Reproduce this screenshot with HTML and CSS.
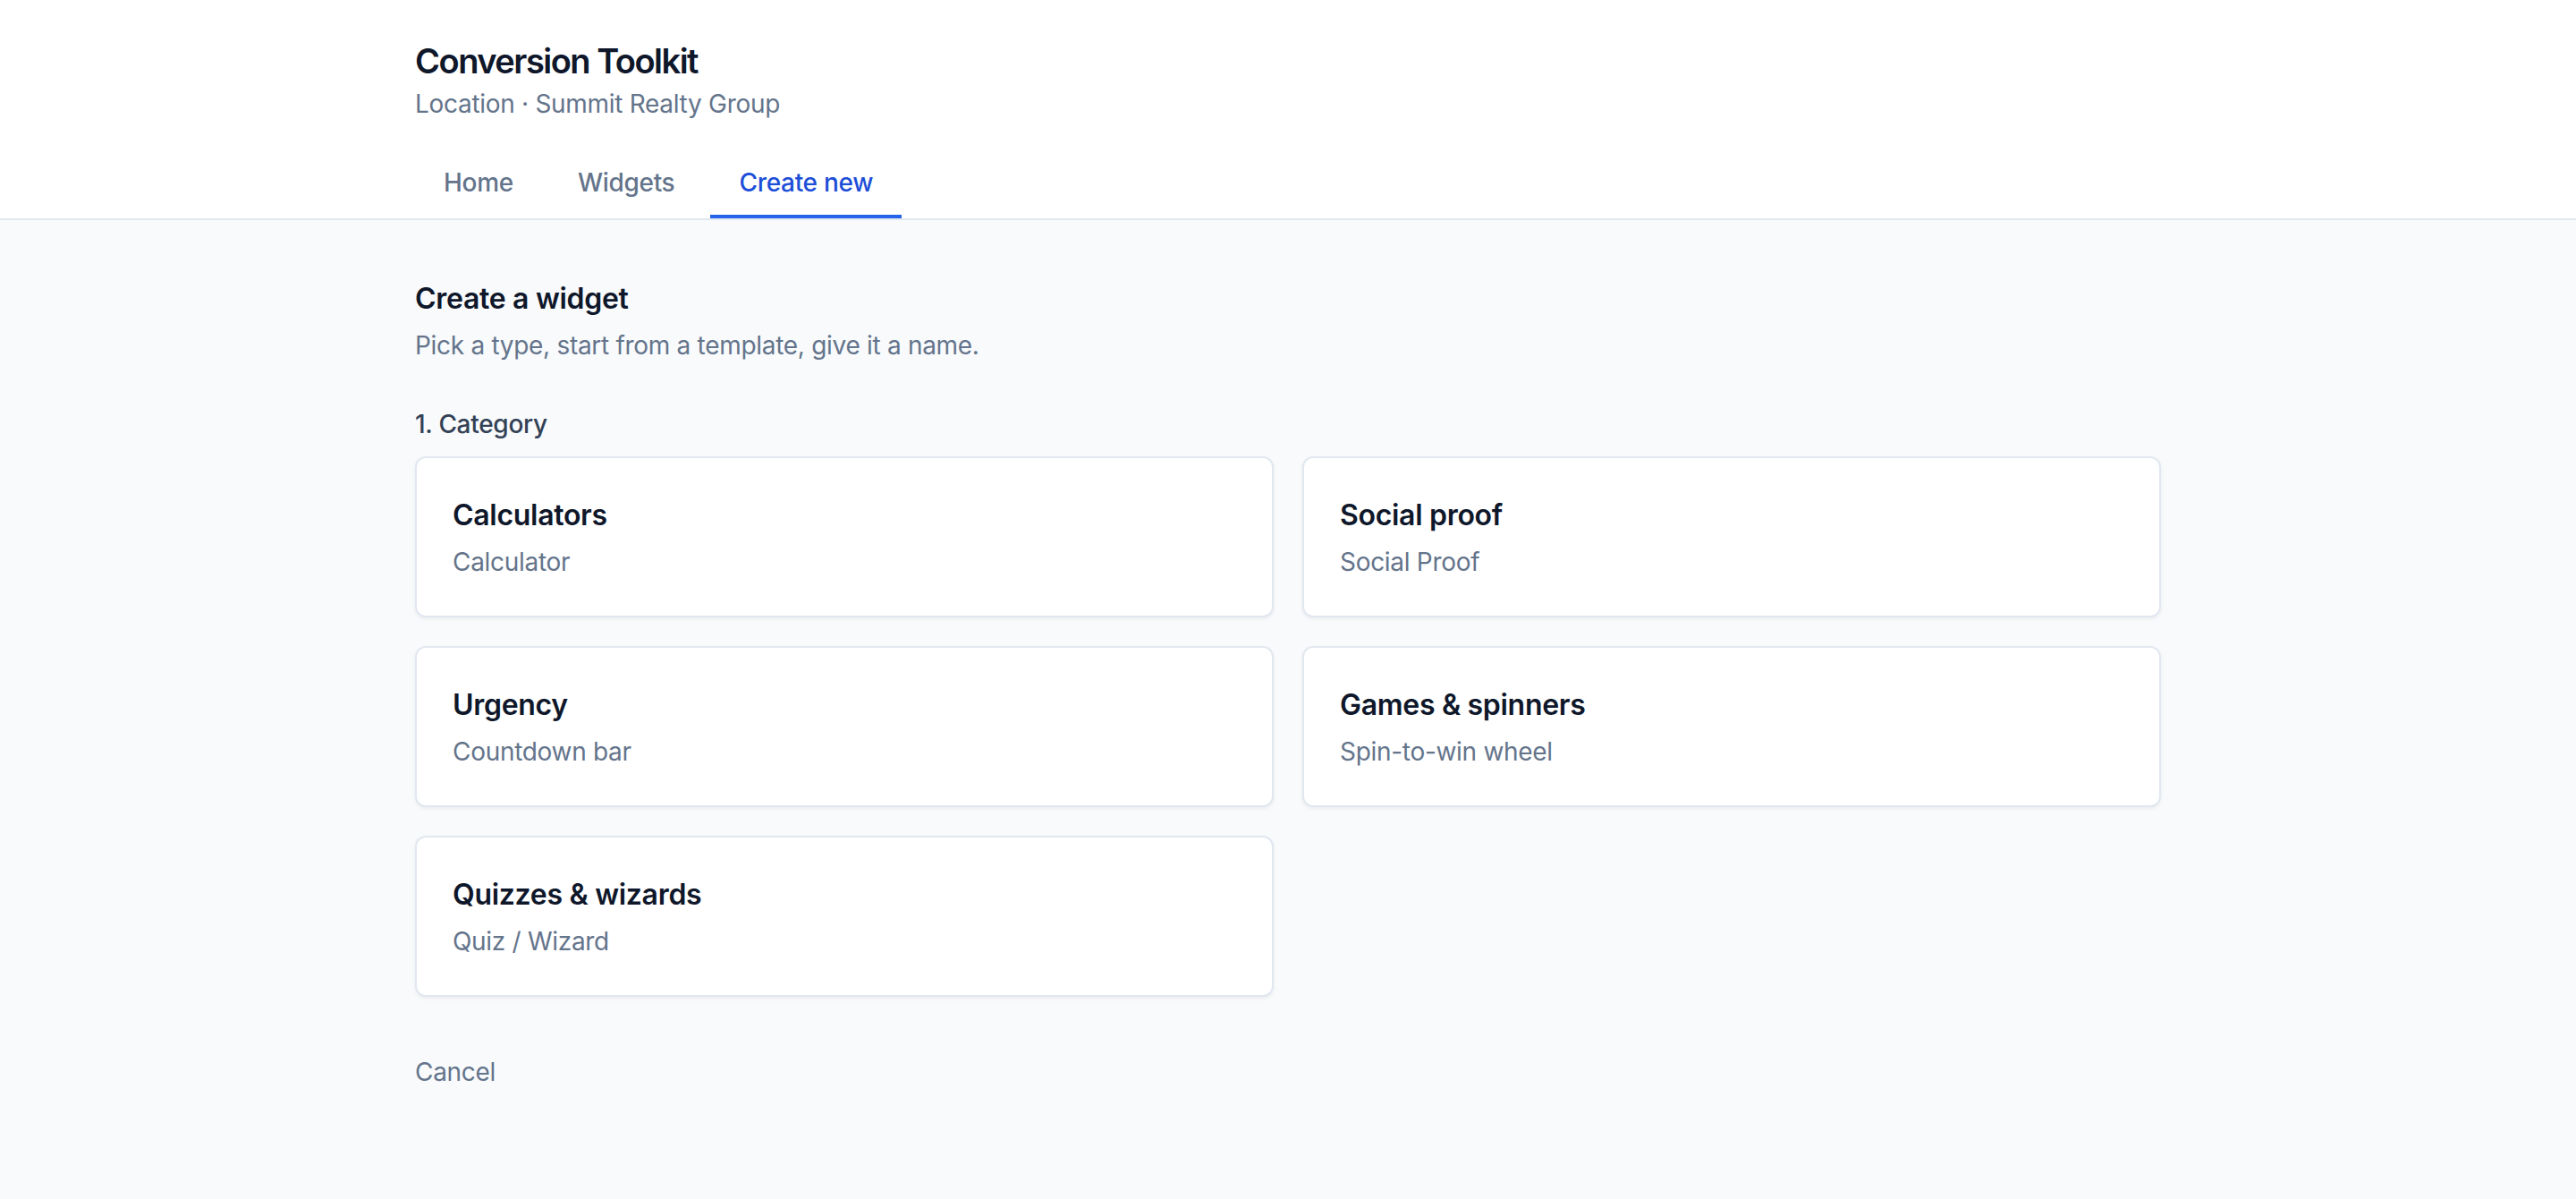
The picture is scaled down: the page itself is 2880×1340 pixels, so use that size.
FILE: index.html
```html
<!DOCTYPE html>
<html lang="en">
<head>
  <meta charset="UTF-8">
  <title>Conversion Toolkit</title>
  <link rel="stylesheet" href="styles.css">
</head>
<body>

  <header class="app-header">
    <div class="wrap">
      <h1 class="app-title">Conversion Toolkit</h1>
      <div class="app-sub">Location · Summit Realty Group</div>

      <nav class="tabs">
        <a class="tab" href="#">Home</a>
        <a class="tab" href="#">Widgets</a>
        <a class="tab active" href="#">Create new</a>
      </nav>
    </div>
  </header>

  <main class="wrap page">
    <h2 class="page-title">Create a widget</h2>
    <p class="page-sub">Pick a type, start from a template, give it a name.</p>

    <div class="step-label">1. Category</div>

    <div class="category-grid">
      <button class="category-card">
        <span class="card-title">Calculators</span>
        <span class="card-sub">Calculator</span>
      </button>
      <button class="category-card">
        <span class="card-title">Social proof</span>
        <span class="card-sub">Social Proof</span>
      </button>
      <button class="category-card">
        <span class="card-title">Urgency</span>
        <span class="card-sub">Countdown bar</span>
      </button>
      <button class="category-card">
        <span class="card-title">Games &amp; spinners</span>
        <span class="card-sub">Spin-to-win wheel</span>
      </button>
      <button class="category-card">
        <span class="card-title">Quizzes &amp; wizards</span>
        <span class="card-sub">Quiz / Wizard</span>
      </button>
    </div>

    <a class="cancel-link" href="#">Cancel</a>
  </main>

</body>
</html>
```

FILE: styles.css
```css
* {
  box-sizing: border-box;
}

body {
  margin: 0;
  font-family: Inter, "Noto Sans", sans-serif;
  letter-spacing: -0.3px;
  background: #f8fafc;
  color: #0f172a;
}

.wrap {
  max-width: 2048px;
  margin: 0 auto;
  padding: 0 48px;
}

/* header */
.app-header {
  background: #fff;
  border-bottom: 2px solid #e2e8f0;
  padding-top: 40px;
}

.app-title {
  margin: 0;
  font-size: 38px;
  line-height: 56px;
  font-weight: 600;
  letter-spacing: -1.5px;
  color: #0f172a;
}

.app-sub {
  font-size: 28px;
  line-height: 40px;
  color: #64748b;
}

.tabs {
  display: flex;
  gap: 8px;
  margin-top: 32px;
}

.tab {
  display: block;
  padding: 16px 32px;
  font-size: 28px;
  line-height: 40px;
  font-weight: 500;
  color: #64748b;
  text-decoration: none;
  border-bottom: 4px solid transparent;
}

.tab.active {
  color: #1d4ed8;
  border-bottom-color: #2563eb;
}

/* page */
.page {
  padding-top: 64px;
  padding-bottom: 64px;
}

.page-title {
  margin: 0;
  font-size: 32px;
  line-height: 48px;
  font-weight: 600;
  color: #0f172a;
}

.page-sub {
  margin: 8px 0 0;
  font-size: 28px;
  line-height: 40px;
  color: #64748b;
}

.step-label {
  margin-top: 48px;
  font-size: 28px;
  line-height: 40px;
  font-weight: 500;
  color: #334155;
}

.category-grid {
  display: grid;
  grid-template-columns: 1fr 1fr;
  gap: 32px;
  margin-top: 16px;
}

.category-card {
  display: flex;
  flex-direction: column;
  align-items: flex-start;
  padding: 40px;
  background: #fff;
  border: 2px solid #e2e8f0;
  border-radius: 12px;
  box-shadow: 0 2px 4px rgba(15, 23, 42, 0.06);
  font-family: inherit;
  letter-spacing: inherit;
  text-align: left;
  cursor: pointer;
}

.card-title {
  font-size: 32px;
  line-height: 48px;
  font-weight: 600;
  color: #0f172a;
}

.card-sub {
  margin-top: 8px;
  font-size: 28px;
  line-height: 40px;
  color: #64748b;
}

.cancel-link {
  display: inline-block;
  margin-top: 64px;
  font-size: 28px;
  line-height: 40px;
  color: #64748b;
  text-decoration: none;
}
```
